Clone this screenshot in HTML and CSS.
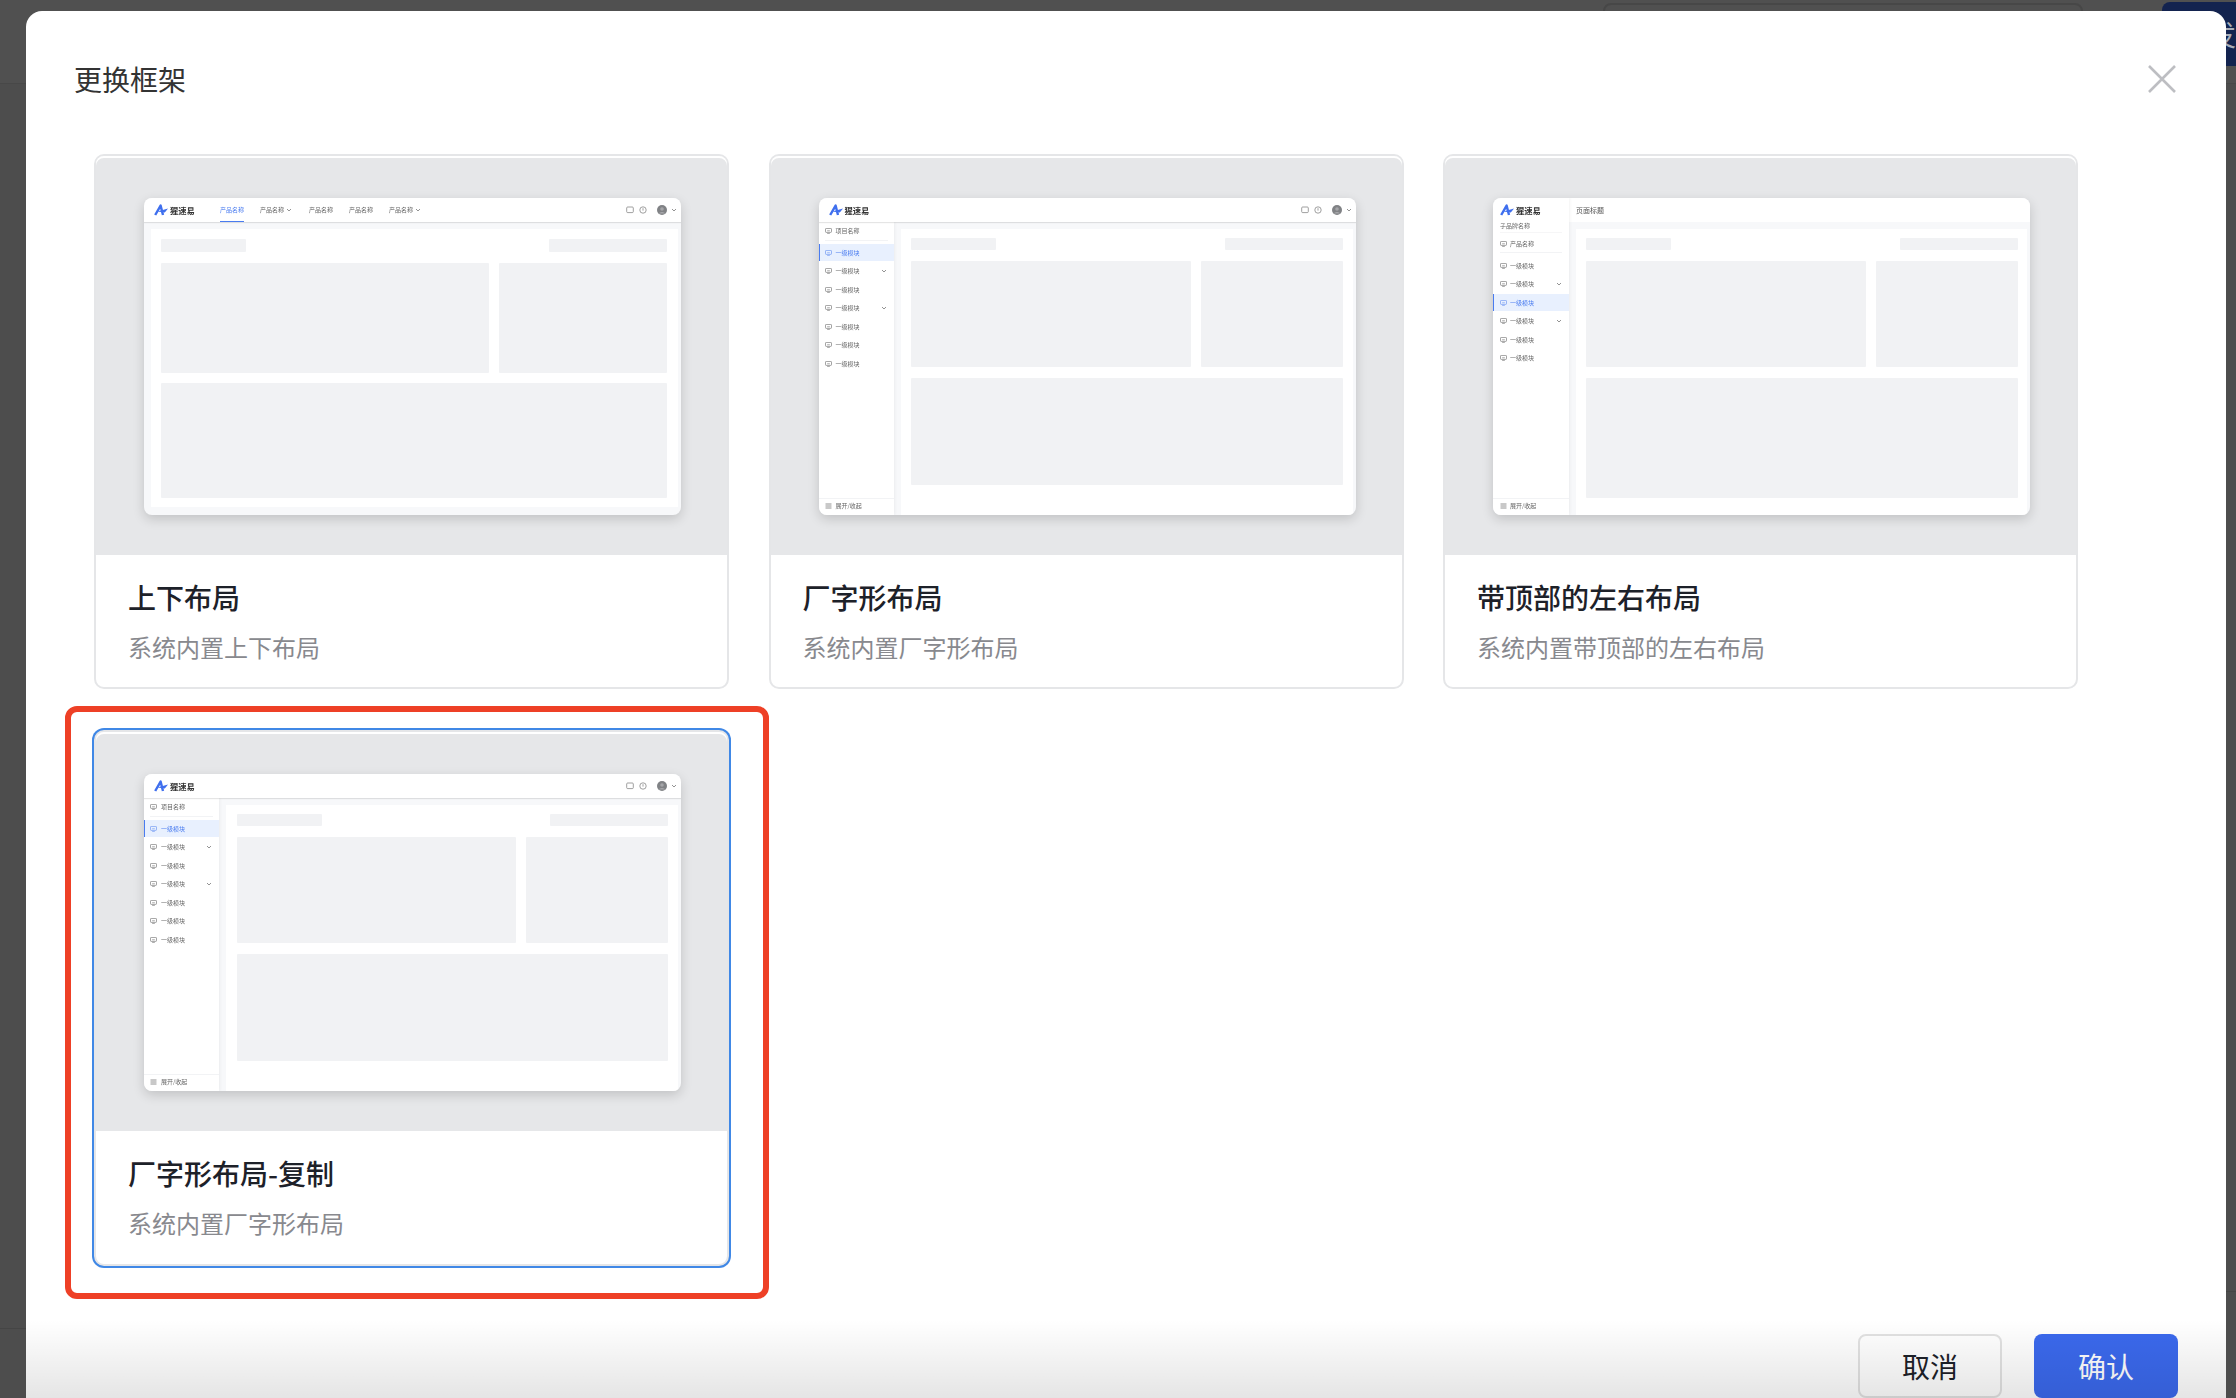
FILE: index.html
```html
<!DOCTYPE html>
<html lang="zh-CN">

<head>
    <meta charset="UTF-8">
    <title>更换框架</title>
    <link rel="stylesheet" href="styles.css">
</head>

<body>
    <svg class="defs" width="0" height="0">
        <symbol id="logo" viewBox="0 0 14 12">
            <path d="M1.2 11 6.6 1.6 9 11" fill="none" stroke="#3f6fee" stroke-width="2.4" stroke-linejoin="round" />
            <path d="M3.4 7.4 14 4.4 10.8 8.6Z" fill="#3f6fee" />
        </symbol>
        <symbol id="screen" viewBox="0 0 8 7">
            <rect x=".5" y=".5" width="7" height="4.6" rx=".8" fill="none" stroke="currentColor" stroke-width=".8" />
            <path d="M2.4 6.4h3.2M2.4 3.2h3.2" stroke="currentColor" stroke-width=".7" />
        </symbol>
        <symbol id="chev" viewBox="0 0 6 4">
            <path d="M1 1 3 3 5 1" fill="none" stroke="currentColor" stroke-width=".8" />
        </symbol>
        <symbol id="msg" viewBox="0 0 8 8">
            <rect x=".7" y="1" width="6.6" height="5.6" rx="1" fill="none" stroke="#888" stroke-width=".8" />
        </symbol>
        <symbol id="help" viewBox="0 0 8 8">
            <circle cx="4" cy="4" r="3.2" fill="none" stroke="#888" stroke-width=".8" />
            <path d="M4 2.2V4.6" stroke="#888" stroke-width=".8" />
        </symbol>
        <symbol id="avatar" viewBox="0 0 10 10">
            <circle cx="5" cy="5" r="5" fill="#808285" />
            <circle cx="5" cy="4" r="1.8" fill="#a5a6a9" />
            <path d="M2 8.6C2.6 6.6 7.4 6.6 8 8.6Z" fill="#a5a6a9" />
        </symbol>
        <symbol id="fold" viewBox="0 0 7 6">
            <path d="M.5 1h6M.5 3h6M.5 5h6" stroke="currentColor" stroke-width=".8" />
        </symbol>
    </svg>

    <!-- 后面被遮罩盖住的页面 -->
    <div class="backdrop">
        <div class="bg-top">
            <span class="bg-input"></span>
            <span class="bg-publish">发布</span>
        </div>
        <div class="bg-line-left"></div>
        <div class="bg-line-right"></div>
    </div>

    <div class="modal">
        <div class="modal-head">
            <h2 class="modal-title">更换框架</h2>
            <svg class="modal-close" viewBox="0 0 28 28">
                <path d="M1 1 27 27M27 1 1 27" stroke="#bdbec2" stroke-width="2.6" />
            </svg>
        </div>

        <div class="cards">
            <!-- 上下布局 -->
            <div class="card">
                <div class="preview">
                    <div class="thumb thumb-top">
                        <div class="thumb-head">
                            <svg class="logo-icon"><use href="#logo" /></svg>
                            <span class="logo-text">猩速易</span>
                            <div class="top-nav">
                                <span class="top-nav-item on">产品名称</span>
                                <span class="top-nav-item">产品名称<svg class="chev"><use href="#chev" /></svg></span>
                                <span class="top-nav-item">产品名称</span>
                                <span class="top-nav-item">产品名称</span>
                                <span class="top-nav-item">产品名称<svg class="chev"><use href="#chev" /></svg></span>
                            </div>
                            <div class="head-tools">
                                <svg class="tool"><use href="#msg" /></svg>
                                <svg class="tool"><use href="#help" /></svg>
                                <svg class="head-avatar"><use href="#avatar" /></svg>
                                <svg class="chev"><use href="#chev" /></svg>
                            </div>
                        </div>
                        <div class="thumb-main">
                            <div class="panel">
                                <div class="skel-row skel-s"><i class="skel s1"></i><i class="skel s2"></i></div>
                                <div class="skel-row skel-m"><i class="skel m1"></i><i class="skel m2"></i></div>
                                <div class="skel skel-l"></div>
                            </div>
                        </div>
                    </div>
                </div>
                <div class="card-body">
                    <div class="card-title">上下布局</div>
                    <div class="card-desc">系统内置上下布局</div>
                </div>
            </div>

            <!-- 厂字形布局 -->
            <div class="card">
                <div class="preview">
                    <div class="thumb">
                        <div class="thumb-head">
                            <svg class="logo-icon"><use href="#logo" /></svg>
                            <span class="logo-text">猩速易</span>
                            <div class="head-tools">
                                <svg class="tool"><use href="#msg" /></svg>
                                <svg class="tool"><use href="#help" /></svg>
                                <svg class="head-avatar"><use href="#avatar" /></svg>
                                <svg class="chev"><use href="#chev" /></svg>
                            </div>
                        </div>
                        <div class="thumb-body">
                            <div class="side">
                                <div class="side-project"><svg class="side-icon"><use href="#screen" /></svg>项目名称</div>
                                <div class="side-list">
                                    <div class="side-item on"><svg class="side-icon"><use href="#screen" /></svg>一级模块</div>
                                    <div class="side-item"><svg class="side-icon"><use href="#screen" /></svg>一级模块<svg class="chev"><use href="#chev" /></svg></div>
                                    <div class="side-item"><svg class="side-icon"><use href="#screen" /></svg>一级模块</div>
                                    <div class="side-item"><svg class="side-icon"><use href="#screen" /></svg>一级模块<svg class="chev"><use href="#chev" /></svg></div>
                                    <div class="side-item"><svg class="side-icon"><use href="#screen" /></svg>一级模块</div>
                                    <div class="side-item"><svg class="side-icon"><use href="#screen" /></svg>一级模块</div>
                                    <div class="side-item"><svg class="side-icon"><use href="#screen" /></svg>一级模块</div>
                                </div>
                                <div class="side-foot"><svg class="side-icon"><use href="#fold" /></svg>展开/收起</div>
                            </div>
                            <div class="panel">
                                <div class="skel-row skel-s"><i class="skel s1"></i><i class="skel s2"></i></div>
                                <div class="skel-row skel-m"><i class="skel m1"></i><i class="skel m2"></i></div>
                                <div class="skel skel-l"></div>
                            </div>
                        </div>
                    </div>
                </div>
                <div class="card-body">
                    <div class="card-title">厂字形布局</div>
                    <div class="card-desc">系统内置厂字形布局</div>
                </div>
            </div>

            <!-- 带顶部的左右布局 -->
            <div class="card">
                <div class="preview">
                    <div class="thumb thumb-lr">
                        <div class="side">
                            <div class="side-logo">
                                <svg class="logo-icon"><use href="#logo" /></svg>
                                <span class="logo-text">猩速易</span>
                            </div>
                            <div class="side-brand">子品牌名称</div>
                            <div class="side-project"><svg class="side-icon"><use href="#screen" /></svg>产品名称</div>
                            <div class="side-list">
                                <div class="side-item"><svg class="side-icon"><use href="#screen" /></svg>一级模块</div>
                                <div class="side-item"><svg class="side-icon"><use href="#screen" /></svg>一级模块<svg class="chev"><use href="#chev" /></svg></div>
                                <div class="side-item on"><svg class="side-icon"><use href="#screen" /></svg>一级模块</div>
                                <div class="side-item"><svg class="side-icon"><use href="#screen" /></svg>一级模块<svg class="chev"><use href="#chev" /></svg></div>
                                <div class="side-item"><svg class="side-icon"><use href="#screen" /></svg>一级模块</div>
                                <div class="side-item"><svg class="side-icon"><use href="#screen" /></svg>一级模块</div>
                            </div>
                            <div class="side-foot"><svg class="side-icon"><use href="#fold" /></svg>展开/收起</div>
                        </div>
                        <div class="lr-right">
                            <div class="thumb-head page-title">页面标题</div>
                            <div class="panel">
                                <div class="skel-row skel-s"><i class="skel s1"></i><i class="skel s2"></i></div>
                                <div class="skel-row skel-m"><i class="skel m1"></i><i class="skel m2"></i></div>
                                <div class="skel skel-l"></div>
                            </div>
                        </div>
                    </div>
                </div>
                <div class="card-body">
                    <div class="card-title">带顶部的左右布局</div>
                    <div class="card-desc">系统内置带顶部的左右布局</div>
                </div>
            </div>

            <!-- 厂字形布局-复制 -->
            <div class="card card-selected">
                <div class="preview">
                    <div class="thumb">
                        <div class="thumb-head">
                            <svg class="logo-icon"><use href="#logo" /></svg>
                            <span class="logo-text">猩速易</span>
                            <div class="head-tools">
                                <svg class="tool"><use href="#msg" /></svg>
                                <svg class="tool"><use href="#help" /></svg>
                                <svg class="head-avatar"><use href="#avatar" /></svg>
                                <svg class="chev"><use href="#chev" /></svg>
                            </div>
                        </div>
                        <div class="thumb-body">
                            <div class="side">
                                <div class="side-project"><svg class="side-icon"><use href="#screen" /></svg>项目名称</div>
                                <div class="side-list">
                                    <div class="side-item on"><svg class="side-icon"><use href="#screen" /></svg>一级模块</div>
                                    <div class="side-item"><svg class="side-icon"><use href="#screen" /></svg>一级模块<svg class="chev"><use href="#chev" /></svg></div>
                                    <div class="side-item"><svg class="side-icon"><use href="#screen" /></svg>一级模块</div>
                                    <div class="side-item"><svg class="side-icon"><use href="#screen" /></svg>一级模块<svg class="chev"><use href="#chev" /></svg></div>
                                    <div class="side-item"><svg class="side-icon"><use href="#screen" /></svg>一级模块</div>
                                    <div class="side-item"><svg class="side-icon"><use href="#screen" /></svg>一级模块</div>
                                    <div class="side-item"><svg class="side-icon"><use href="#screen" /></svg>一级模块</div>
                                </div>
                                <div class="side-foot"><svg class="side-icon"><use href="#fold" /></svg>展开/收起</div>
                            </div>
                            <div class="panel">
                                <div class="skel-row skel-s"><i class="skel s1"></i><i class="skel s2"></i></div>
                                <div class="skel-row skel-m"><i class="skel m1"></i><i class="skel m2"></i></div>
                                <div class="skel skel-l"></div>
                            </div>
                        </div>
                    </div>
                </div>
                <div class="card-body">
                    <div class="card-title">厂字形布局-复制</div>
                    <div class="card-desc">系统内置厂字形布局</div>
                </div>
                <!-- 截图上的红色标注框 -->
                <span class="mark"></span>
            </div>
        </div>

        <div class="modal-foot">
            <button class="btn">取消</button>
            <button class="btn btn-primary">确认</button>
        </div>
    </div>
</body>

</html>
```

FILE: styles.css
```css
* {
    margin: 0;
    padding: 0;
    box-sizing: border-box;
}

html,
body {
    height: 100%;
    overflow: hidden;
}

body {
    background-color: #4d4d4d;
    font-family: "Noto Sans CJK SC", "Noto Sans", sans-serif;
    color: #1d2129;
}

.defs {
    position: absolute;
}

/* 遮罩后面的页面 */
.backdrop {
    position: absolute;
    top: 0;
    left: 0;
    right: 0;
    bottom: 0;
}

.bg-top {
    display: flex;
    justify-content: flex-end;
    align-items: flex-start;
    height: 84px;
    padding-top: 2px;
    background-color: #505050;
    border-bottom: 1px solid #484848;
}

.bg-input {
    width: 480px;
    height: 40px;
    margin-top: 1px;
    margin-right: 79px;
    border: 2px solid #474747;
    border-radius: 8px;
}

.bg-publish {
    width: 74px;
    height: 64px;
    padding-left: 46px;
    border-radius: 8px 0 0 8px;
    background-color: #13234f;
    color: #a9adb8;
    font-size: 28px;
    line-height: 64px;
    white-space: nowrap;
    overflow: hidden;
}

.bg-line-left {
    position: absolute;
    top: 1328px;
    left: 0;
    width: 26px;
    height: 1px;
    background-color: #454545;
}

.bg-line-right {
    position: absolute;
    top: 1291px;
    right: 0;
    width: 10px;
    height: 1px;
    background-color: #454545;
}

/* 弹窗 */
.modal {
    position: absolute;
    top: 11px;
    left: 26px;
    width: 2200px;
    height: 1387px;
    border-radius: 16px 16px 0 0;
    background-color: #fff;
    overflow: hidden;
}

.modal-head {
    display: flex;
    justify-content: space-between;
    align-items: center;
    padding: 48px 50px 55px 48px;
}

.modal-title {
    font-size: 28px;
    font-weight: 400;
    line-height: 40px;
    color: #333;
}

.modal-close {
    width: 28px;
    height: 28px;
}

.cards {
    display: grid;
    grid-template-columns: repeat(3, 635px);
    column-gap: 39.5px;
    row-gap: 41px;
    padding-left: 68px;
}

.card {
    position: relative;
    height: 535px;
    border: 2px solid #e5e6e8;
    border-radius: 10px;
    background-color: #fff;
}

.card-selected {
    height: 536px;
    box-shadow: 0 0 0 2px #4088e6;
}

.card-selected .panel {
    padding-left: 11px;
}

.card-selected .skel-row {
    width: 431px;
}

.card-selected .m1 {
    width: 279px;
}

.card-selected .skel-l {
    width: 431px;
}

.mark {
    position: absolute;
    top: -26px;
    left: -31px;
    right: -42px;
    bottom: -35px;
    border: 6px solid #ee4026;
    border-radius: 12px;
}

.preview {
    height: 399px;
    padding: 42px 46px 40px 48px;
    border-radius: 8px 8px 0 0;
    background-color: #e6e7e9;
    box-shadow: inset 0 2px 0 #fff;
}

.card-body {
    padding: 21.5px 0 0 32px;
}

.card-title {
    font-size: 28px;
    font-weight: 500;
    line-height: 40px;
}

.card-desc {
    margin-top: 13.5px;
    font-size: 24px;
    line-height: 34px;
    color: #88898e;
}

/* 预览缩略图 */
.thumb {
    display: flex;
    flex-direction: column;
    width: 537px;
    height: 317px;
    border-radius: 8px;
    background-color: #f7f8fa;
    box-shadow: 0 4px 12px rgba(0, 0, 0, .16);
    overflow: hidden;
    filter: blur(.5px);
    font-size: 6px;
    line-height: 8px;
    color: #666;
}

.thumb-lr {
    flex-direction: row;
}

.thumb-head {
    display: flex;
    flex: none;
    align-items: center;
    height: 24px;
    padding-left: 10px;
    background-color: #fff;
    box-shadow: 0 1px 1px rgba(0, 0, 0, .1);
    position: relative;
    z-index: 1;
}

.logo-icon {
    width: 14px;
    height: 12px;
    margin-right: 2px;
}

.logo-text {
    font-size: 8.3px;
    font-weight: 700;
    color: #333;
}

.top-nav {
    display: flex;
    gap: 16px;
    align-items: center;
    height: 24px;
    margin-left: 25px;
}

.top-nav-item {
    display: flex;
    align-items: center;
    height: 24px;
}

.top-nav-item .chev {
    margin: 0 1px 0 2px;
}

.top-nav-item.on {
    color: #4a7cf0;
    border-bottom: 1px solid #4a7cf0;
}

.chev {
    width: 6px;
    height: 4px;
    margin: 0 2px;
    color: #777;
}

.head-tools {
    display: flex;
    align-items: center;
    margin-left: auto;
    padding-right: 2px;
}

.tool {
    width: 8px;
    height: 8px;
    margin-right: 5px;
}

.head-avatar {
    width: 10px;
    height: 10px;
    margin: 0 2px 0 5px;
}

.thumb-body {
    display: flex;
    flex: 1;
    min-height: 0;
}

.side {
    display: flex;
    flex: none;
    flex-direction: column;
    width: 75px;
    background-color: #fff;
    box-shadow: 1px 0 3px rgba(0, 0, 0, .05);
}

.side-icon {
    flex: none;
    width: 7px;
    height: 6px;
    margin-right: 4px;
    color: #777;
}

.side-project {
    display: flex;
    flex: none;
    align-items: center;
    height: 19px;
    margin: 0 6px 3px;
    border-bottom: 1px solid #f2f3f5;
}

.side-list {
    display: flex;
    flex-direction: column;
    gap: 1.5px;
}

.side-item {
    display: flex;
    align-items: center;
    height: 17px;
    padding-left: 6px;
}

.side-item .chev {
    margin-left: auto;
    margin-right: 7px;
}

.side-item.on {
    padding-left: 5px;
    border-left: 1px solid #4a7cf0;
    background-color: #e8f0fe;
    color: #4a7cf0;
}

.side-item.on .side-icon {
    color: #6d95f2;
}

.side-foot {
    display: flex;
    flex: none;
    align-items: center;
    height: 17.5px;
    margin-top: auto;
    padding: 0 0 2px 6px;
    border-top: 1px solid #f2f3f5;
}

/* 带顶部的左右布局 */
.thumb-lr .side {
    width: 76px;
    z-index: 2;
}

.side-logo {
    display: flex;
    flex: none;
    align-items: center;
    height: 24px;
    padding-left: 7px;
}

.side-brand {
    flex: none;
    height: 14px;
    margin-top: -3px;
    padding: 3px 0 0 7px;
}

.thumb-lr .side-project {
    height: 20px;
    margin: 0 7px 4px;
    padding-top: 2px;
    box-shadow: 0 -1px 0 #f6f6f7;
}

.thumb-lr .side-icon {
    margin-right: 3px;
}

.thumb-lr .side-item {
    padding-left: 7px;
}

.thumb-lr .side-item.on {
    padding-left: 6px;
}

.thumb-lr .side-list {
    gap: 1.6px;
}

.thumb-lr .side-foot {
    padding-left: 7px;
}

.lr-right {
    display: flex;
    flex: 1;
    flex-direction: column;
    min-width: 0;
}

.page-title {
    padding-left: 7px;
    background-color: #fff;
    box-shadow: none;
    font-size: 7px;
    color: #555;
}

/* 灰色占位块 */
.panel {
    flex: 1;
    margin: 7px 3px 0 7px;
    padding: 9px 0 0 10px;
    background-color: #fff;
}

.skel {
    display: block;
    background-color: #f1f2f4;
    border-radius: 1px;
}

.skel-row {
    display: flex;
    justify-content: space-between;
    width: 432px;
}

.skel-s {
    height: 12px;
}

.skel-m {
    height: 106px;
    margin-top: 11px;
}

.skel-l {
    width: 432px;
    height: 107px;
    margin-top: 11px;
}

.s1 {
    width: 85px;
}

.s2 {
    width: 118px;
}

.m1 {
    width: 280px;
}

.m2 {
    width: 142px;
}

.thumb-lr .skel-l {
    height: 120px;
}

.thumb-lr .panel {
    padding-left: 10px;
}

.thumb-top .thumb-main {
    flex: 1;
    padding-bottom: 8px;
}

.thumb-top .panel {
    height: 278px;
    padding: 10px 0 0 10px;
}

.thumb-top .skel-row {
    width: 506px;
}

.thumb-top .skel-s {
    height: 13px;
}

.thumb-top .skel-m {
    height: 110px;
}

.thumb-top .m1 {
    width: 328px;
}

.thumb-top .m2 {
    width: 168px;
}

.thumb-top .skel-l {
    width: 506px;
    height: 115px;
    margin-top: 10px;
}

/* 底部按钮 */
.modal-foot {
    position: relative;
    display: flex;
    justify-content: flex-end;
    align-items: flex-end;
    gap: 32px;
    height: 78px;
    margin-top: 54px;
    padding-right: 48px;
}

.modal-foot::after {
    content: "";
    position: absolute;
    top: 0;
    left: 0;
    right: 0;
    bottom: 0;
    background: linear-gradient(rgba(0, 0, 0, 0), rgba(0, 0, 0, .1));
    pointer-events: none;
}

.btn {
    width: 144px;
    height: 64px;
    border: 2px solid #e2e2e2;
    border-radius: 8px;
    background-color: #fff;
    color: #1d2129;
    font-family: inherit;
    font-size: 28px;
}

.btn-primary {
    border: 0;
    background-color: #3b69ed;
    color: #fff;
}
```
